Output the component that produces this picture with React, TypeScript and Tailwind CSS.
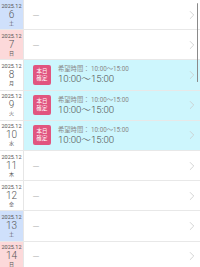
import { ChevronRight } from 'lucide-react'

interface DayEntry {
  day: number
  weekday: string
  kind: 'sat' | 'sun' | 'weekday'
  confirmed?: boolean
}

const DAYS: DayEntry[] = [
  { day: 6, weekday: '土', kind: 'sat' },
  { day: 7, weekday: '日', kind: 'sun' },
  { day: 8, weekday: '月', kind: 'weekday', confirmed: true },
  { day: 9, weekday: '火', kind: 'weekday', confirmed: true },
  { day: 10, weekday: '水', kind: 'weekday', confirmed: true },
  { day: 11, weekday: '木', kind: 'weekday' },
  { day: 12, weekday: '金', kind: 'weekday' },
  { day: 13, weekday: '土', kind: 'sat' },
  { day: 14, weekday: '日', kind: 'sun' },
]

function DateCell({ entry }: { entry: DayEntry }) {
  const bg =
    entry.kind === 'sat' ? 'bg-[#cfe0fb]' : entry.kind === 'sun' ? 'bg-[#fcd9da]' : 'bg-white'
  return (
    <div
      className={`w-[24px] shrink-0 flex flex-col items-center justify-center border-r border-[#e6e6e6] text-[#555] ${bg}`}
    >
      <span className="text-[5.5px] leading-[7px]">2025.12</span>
      <span className="text-[10px] leading-[10px] font-light">{entry.day}</span>
      <span className="text-[5px] leading-[7px]">{entry.weekday}</span>
    </div>
  )
}

function Row({ entry }: { entry: DayEntry }) {
  return (
    <div className="flex h-[30.2px] border-b border-[#e8e8e8] box-border">
      <DateCell entry={entry} />
      <div
        className={`flex-1 flex items-center pl-[9px] pr-[1px] ${
          entry.confirmed ? 'bg-[#cdf6fd]' : 'bg-white'
        }`}
      >
        {entry.confirmed ? (
          <>
            <div className="w-[18px] h-[20px] rounded-[2px] bg-[#e1557f] text-white flex flex-col items-center justify-center text-[5.5px] leading-[7px] shrink-0">
              <span>本日</span>
              <span>確定</span>
            </div>
            <div className="flex flex-col ml-[7px] pt-[1px]">
              <span className="text-[6.3px] leading-[8px] text-[#8a8a8a] whitespace-nowrap">
                希望時間： 10:00〜15:00
              </span>
              <span className="text-[9.6px] leading-[12px] text-[#4a4a4a] font-light whitespace-nowrap">
                10:00〜15:00
              </span>
            </div>
          </>
        ) : (
          <span
            className="text-[6px] leading-[6px] text-[#888]"
            style={{ fontFamily: '"Liberation Sans", sans-serif' }}
          >
            —
          </span>
        )}
        <ChevronRight className="ml-auto w-[14px] h-[14px] text-[#cacaca] shrink-0" strokeWidth={1.4} />
      </div>
    </div>
  )
}

export default function App() {
  return (
    <div
      className="relative w-[200px] h-[267px] overflow-hidden bg-white"
      style={{ fontFamily: 'Roboto, "Noto Sans CJK JP", sans-serif' }}
    >
      {DAYS.map((d) => (
        <Row key={d.day} entry={d} />
      ))}
      {/* scroll indicator */}
      <div className="absolute right-[2px] top-[3px] w-[1.5px] h-[79px] rounded-full bg-[#8a8a8a]" />
    </div>
  )
}
